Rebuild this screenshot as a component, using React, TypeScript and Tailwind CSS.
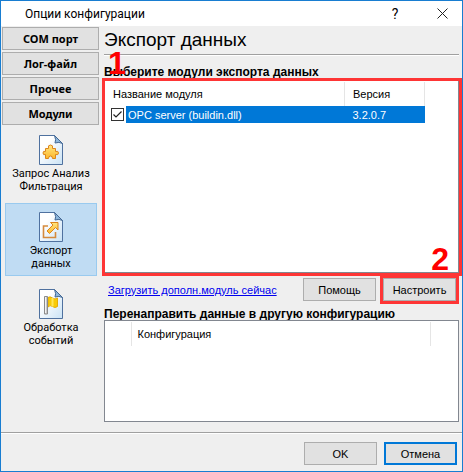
import { useState } from "react";

const sections = ["COM порт", "Лог-файл", "Прочее", "Модули"];

const modulePages = [
  { id: "filter", lines: ["Запрос Анализ", "Фильтрация"] },
  { id: "export", lines: ["Экспорт", "данных"] },
  { id: "events", lines: ["Обработка", "событий"] },
];

const PageIcon = ({ id }: { id: string }) => (
  <svg width="24" height="30" viewBox="0 0 24 30" aria-hidden="true">
    <defs>
      <linearGradient id={`paper-${id}`} x1="0" y1="0" x2="1" y2="1">
        <stop offset="0.3" stopColor="#ffffff" />
        <stop offset="1" stopColor="#c9e2f5" />
      </linearGradient>
      <linearGradient id={`gold-${id}`} x1="0" y1="0" x2="0" y2="1">
        <stop offset="0" stopColor="#ffe680" />
        <stop offset="1" stopColor="#fcb72c" />
      </linearGradient>
    </defs>
    <path d="M.5 .5H15.5L23.5 8.5V29.5H.5Z" fill={`url(#paper-${id})`} stroke="#4f719f" />
    <path d="M15.5 .5Q17.5 5 16 8Q20 6.500 23.500 8.500Z" fill="#8db7dc" stroke="#416693" />
    {id === "filter" && (
      <path
        d="M6.500 13.500H9.500Q8.500 10 11.500 10T13.500 13.500H16.500V16.500Q19.500 15.500 19.500 18T16.500 19.500V23.500H13.500Q13.500 21 11.500 21T9.500 23.500H6.500V19.500Q4 20.500 4 18T6.500 16.500Z"
        fill={`url(#gold-${id})`}
        stroke="#dc851c"
      />
    )}
    {id === "export" && (
      <>
        <path d="M9 14H4.500V25.500H16.500V20" fill="none" stroke="#d58a3d" strokeWidth="1.600" />
        <path d="M11.500 10.500H19V18L16.500 15.500L10.500 21.500L8 19L14 13Z" fill={`url(#gold-${id})`} stroke="#dc851c" />
      </>
    )}
    {id === "events" && (
      <>
        <path d="M9 8.500Q11 7 13.500 9T18.500 9V17.500Q16 19.500 13.500 17.500T9 18Z" fill="#f8cb08" stroke="#e4ac08" />
        <path d="M13.500 9V17.500" stroke="#ffe65a" strokeWidth="2" />
        <path d="M5.500 7.500H8.500V25H5.500Z" fill="#c9c9c9" stroke="#8b8b8b" />
        <path d="M6.500 8V24" stroke="#f3f3f3" />
      </>
    )}
  </svg>
);

const dialogButton =
  "h-[23px] w-[73px] border border-[#adadad] bg-[#e1e1e1] text-[11px] leading-4 text-black";

const App = () => {
  const [activePage, setActivePage] = useState("export");
  const [enabled, setEnabled] = useState(true);

  return (
    <div className="flex min-h-screen flex-col border border-[#187dd1] bg-[#efefef] font-['Liberation_Sans',sans-serif] text-[11px] leading-4 text-black">
      {/* Title bar */}
      <header className="flex h-[25px] items-center bg-white pr-3.5 pl-6 font-['Roboto','Open_Sans',sans-serif] text-xs">
        <h1 className="flex-1">Опции конфигурации</h1>
        <button aria-label="Справка" className="mr-9 w-3 text-sm">
          ?
        </button>
        <button aria-label="Закрыть">
          <svg width="11" height="11" viewBox="0 0 11 11" fill="none" stroke="#222">
            <path d="M.5 .5L10.500 10.500M10.500 .5L.5 10.500" />
          </svg>
        </button>
      </header>

      <div className="flex flex-1">
        {/* Sidebar */}
        <nav className="flex w-[99px] shrink-0 flex-col px-px pt-px">
          <div className="flex flex-col gap-0.5">
            {sections.map((name) => (
              <button
                key={name}
                className="h-[23px] border border-[#adadad] bg-[#e1e1e1] font-['Noto_Sans',sans-serif] text-[11px] leading-4 font-bold"
              >
                {name}
              </button>
            ))}
          </div>
          <div className="mt-px flex flex-col gap-1 pr-0.5 pl-[3px]">
            {modulePages.map((page) => (
              <button
                key={page.id}
                onClick={() => setActivePage(page.id)}
                className={`flex h-[73px] flex-col items-center border pt-2 font-['Roboto','Noto_Sans',sans-serif] text-[11px] leading-[13px] whitespace-nowrap ${
                  activePage === page.id ? "border-[#99caef] bg-[#c0dcf3]" : "border-transparent"
                }`}
              >
                <PageIcon id={page.id} />
                <span className="mt-0.5">
                  {page.lines[0]}
                  <br />
                  {page.lines[1]}
                </span>
              </button>
            ))}
          </div>
        </nav>

        {/* Export settings */}
        <main className="flex min-w-0 flex-1 flex-col pr-[3px] pl-1">
          <h2 className="h-[29px] border-b border-[#a0a0a0] pt-0.5 text-[19px] leading-6 shadow-[0_1px_0_white]">
            Экспорт данных
          </h2>
          <h3 className="relative mt-2 h-[17px] pt-px text-xs leading-4 font-bold">
            Выберите модули экспорта данных
            <span className="absolute -top-4 left-1 text-[32px] leading-8 text-[#fe0000]">1</span>
          </h3>
          <div className="relative">
            <div className="h-[193px] border border-[#828790] bg-white pt-px">
              <table className="w-[320px] table-fixed border-collapse text-left">
                <colgroup>
                  <col className="w-[21px]" />
                  <col />
                  <col className="w-20" />
                </colgroup>
                <thead>
                  <tr className="h-6">
                    <th colSpan={2} className="border-r border-[#e5e5e5] pl-2 font-normal">
                      Название модуля
                    </th>
                    <th className="border-r border-[#e5e5e5] pl-2 font-normal">Версия</th>
                  </tr>
                </thead>
                <tbody>
                  <tr className="h-[17px]">
                    <td className="pl-1.5">
                      <input
                        type="checkbox"
                        id="opc-server"
                        checked={enabled}
                        onChange={() => setEnabled(!enabled)}
                        className="peer sr-only"
                      />
                      <label
                        htmlFor="opc-server"
                        aria-label="OPC server"
                        className="flex size-[13px] items-center justify-center border border-[#333] bg-white *:hidden peer-checked:*:block"
                      >
                        <svg width="11" height="11" viewBox="0 0 11 11" fill="none" stroke="#222" strokeWidth="1.200">
                          <path d="M1.500 5.500L4 8L9.500 2.500" />
                        </svg>
                      </label>
                    </td>
                    <td className="bg-[#0078d7] pl-0.5 text-white">OPC server (buildin.dll)</td>
                    <td className="bg-[#0078d7] pl-2 text-white">3.2.0.7</td>
                  </tr>
                </tbody>
              </table>
            </div>
            <div className="pointer-events-none absolute -top-0.5 -right-[3px] -bottom-[3px] -left-0.5 border-3 border-[#fe3535]" />
            <span className="absolute right-2.5 -bottom-0.5 text-[32px] leading-8 font-bold text-[#fe0000]">2</span>
          </div>

          <div className="mt-[5px] flex items-center pr-[3px] pl-1">
            <a href="#download" className="flex-1 whitespace-nowrap text-[#0000ee] underline">
              Загрузить дополн.модуль сейчас
            </a>
            <button className={dialogButton}>Помощь</button>
            <div className="relative ml-[7px] flex">
              <button className={dialogButton}>Настроить</button>
              <div className="pointer-events-none absolute -inset-[3px] border-3 border-[#fe3535]" />
            </div>
          </div>

          <h3 className="mt-1.5 h-[13px] text-xs leading-[14px] font-bold whitespace-nowrap">
            Перенаправить данные в другую конфигурацию
          </h3>
          <div className="mb-2.5 flex-1 border border-[#828790] bg-white pt-px">
            <table className="w-[326px] table-fixed border-collapse text-left">
              <thead>
                <tr className="h-6">
                  <td className="w-[26px] border-r border-[#e5e5e5]" />
                  <th className="border-r border-[#e5e5e5] pl-1.5 font-normal">Конфигурация</th>
                </tr>
              </thead>
            </table>
          </div>
        </main>
      </div>

      {/* Dialog actions */}
      <footer className="flex h-[39px] justify-end gap-[7px] border-t border-[#a0a0a0] pt-[9px] pr-[5px] shadow-[inset_0_1px_0_white]">
        <button className={dialogButton}>OK</button>
        <button className="h-[23px] w-[73px] border-2 border-[#0078d7] bg-[#e1e1e1] text-[11px] leading-4">
          Отмена
        </button>
      </footer>
    </div>
  );
};

export default App;
